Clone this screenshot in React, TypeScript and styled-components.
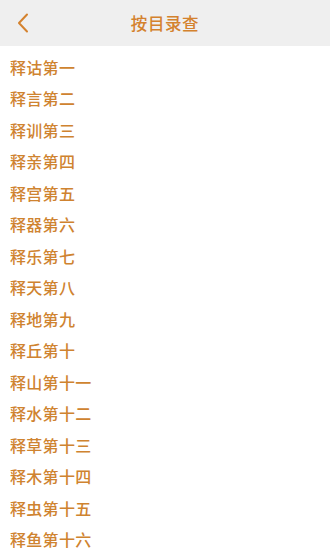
import styled, { createGlobalStyle } from "styled-components";

const GlobalStyle = createGlobalStyle`
body {
  margin: 0;
  background: #ffffff;
  font-family: "Noto Sans CJK SC", "Noto Sans", sans-serif;
}
`

const Page = styled.div`
width: 330px;
min-height: 550px;
background: #ffffff;
`
const Header = styled.div`
position: relative;
height: 46px;
display: flex;
align-items: center;
justify-content: center;
background: #efefef;
`
const BackButton = styled.button`
position: absolute;
left: 12px;
top: 10px;
width: 22px;
height: 26px;
padding: 0;
border: none;
background: none;
display: flex;
align-items: center;
justify-content: center;
`
const Title = styled.h1`
margin: 0;
color: #d4822e;
font-size: 16.5px;
font-weight: 500;
letter-spacing: 0.6px;
`
const List = styled.ul`
list-style: none;
margin: 0;
padding: 5px 0 0 0;
`
const Item = styled.li`
height: 31.5px;
display: flex;
align-items: center;
padding-left: 10px;
color: #cf8330;
font-size: 16px;
font-weight: 500;
letter-spacing: 0.3px;
`

const chapters = [
    "释诂第一", "释言第二", "释训第三", "释亲第四", "释宫第五", "释器第六",
    "释乐第七", "释天第八", "释地第九", "释丘第十", "释山第十一", "释水第十二",
    "释草第十三", "释木第十四", "释虫第十五", "释鱼第十六",
];

const App = () => {
    return (
        <Page>
            <GlobalStyle />
            <Header>
                <BackButton>
                    <svg width="12" height="20" viewBox="0 0 12 20">
                        <path d="M10 1.5 L2 10 L10 18.5" fill="none" stroke="#d4822e" strokeWidth="2" strokeLinecap="round" strokeLinejoin="round" />
                    </svg>
                </BackButton>
                <Title>按目录查</Title>
            </Header>
            <List>
                {chapters.map((c) => (
                    <Item key={c}>{c}</Item>
                ))}
            </List>
        </Page>
    );
};

export default App;
